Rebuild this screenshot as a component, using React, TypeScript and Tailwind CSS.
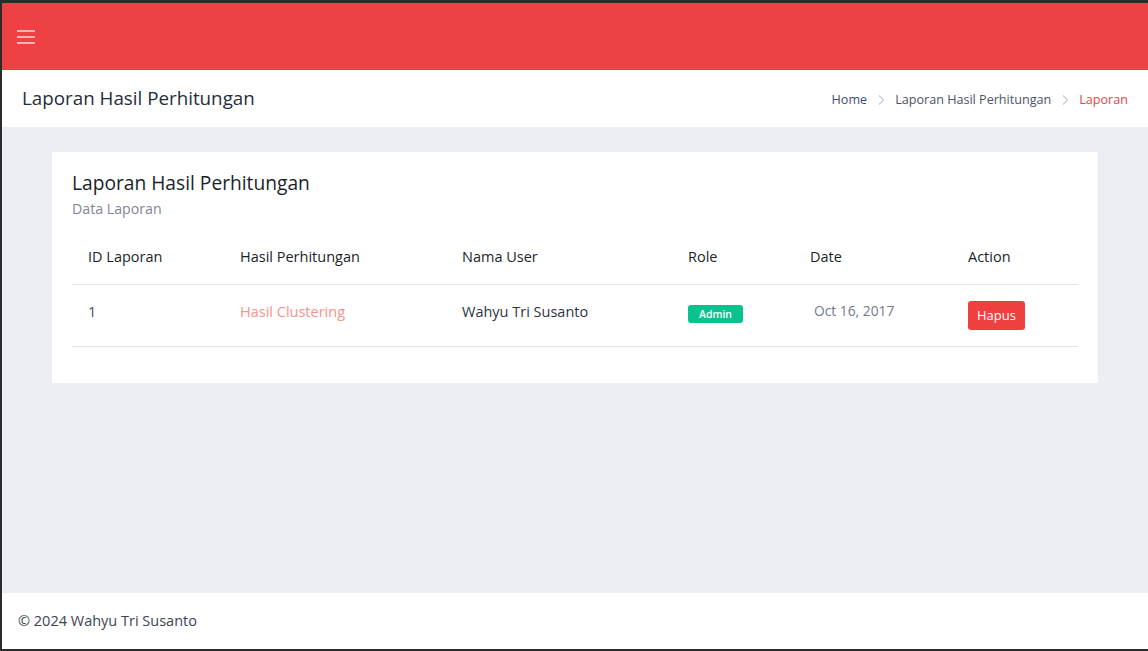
import React from "react";

const columns = ["ID Laporan", "Hasil Perhitungan", "Nama User", "Role", "Date", "Action"];
const widths = ["pl-[16px] w-[168px]", "w-[222px]", "w-[226px]", "w-[122px]", "w-[158px]", ""];

const Chevron: React.FC = () => (
  <span className="mx-[10px] text-[#c8ccd4]">
    <svg width="8" height="12" viewBox="0 0 8 12" fill="none" stroke="currentColor" strokeWidth="1.2">
      <path d="M2 1.5 6.5 6 2 10.5" />
    </svg>
  </span>
);

const App: React.FC = () => {
  return (
    <div
      className="h-[651px] w-[1148px] bg-[#2b2b2b] pt-[3px] pb-[2px] pl-[2px] flex flex-col overflow-hidden"
      style={{ fontFamily: '"Open Sans", "Liberation Sans", sans-serif' }}
    >
      <div className="flex-1 flex flex-col bg-[#ebeef3]">
        {/* top bar */}
        <header className="h-[67px] bg-[#ee4144] flex items-center pl-[15px]">
          <button aria-label="Toggle sidebar" className="flex flex-col gap-[4px] p-0">
            <span className="block w-[18px] h-[2px] bg-white/60" />
            <span className="block w-[18px] h-[2px] bg-white/60" />
            <span className="block w-[18px] h-[2px] bg-white/60" />
          </button>
        </header>

        {/* page title + breadcrumb */}
        <div className="h-[57px] bg-white flex items-center justify-between pl-[20px] pr-[20px]">
          <h1 className="text-[18.8px] text-[#1f2d3d]">Laporan Hasil Perhitungan</h1>
          <nav className="flex items-center text-[12.6px] text-[#4a5567] pt-[3px]">
            <span className="text-[#3d4f6f]">Home</span>
            <Chevron />
            <span>Laporan Hasil Perhitungan</span>
            <Chevron />
            <span className="text-[#ee4144]">Laporan</span>
          </nav>
        </div>

        {/* content */}
        <main className="flex-1 pt-[25px] pl-[50px] pr-[50px]">
          <div className="bg-white px-[20px] pt-[20px] pb-[36px]">
            <h2 className="text-[19.2px] font-medium text-[#1a1f29] leading-[22px]">Laporan Hasil Perhitungan</h2>
            <p className="text-[14.2px] text-[#7d8796] mt-[4px]">Data Laporan</p>

            <table className="w-full mt-[11px] text-[14.5px] text-left">
              <thead>
                <tr className="border-b border-[#e2e4ea] h-[54px]">
                  {columns.map((c, i) => (
                    <th key={c} className={"font-medium text-[#1a1f29] " + widths[i]}>
                      {c}
                    </th>
                  ))}
                </tr>
              </thead>
              <tbody>
                <tr className="border-b border-[#e2e4ea] h-[62px]">
                  <td className="pl-[16px] pb-[7px] text-[#3d4f6f]">1</td>
                  <td className="pb-[7px] text-[#f7918a]">Hasil Clustering</td>
                  <td className="pb-[7px] text-[#2c3442]">Wahyu Tri Susanto</td>
                  <td className="pb-[4px]">
                    <span className="inline-block bg-[#0bc28f] text-white text-[10.5px] font-semibold rounded-[3px] w-[55px] h-[18px] leading-[18px] text-center">
                      Admin
                    </span>
                  </td>
                  <td className="text-[#6f7a8a] text-[13.8px] pl-[4px] pb-[8px]">Oct 16, 2017</td>
                  <td>
                    <button className="bg-[#ef4040] text-white text-[13px] font-medium rounded-[3px] w-[57px] h-[29px]">
                      Hapus
                    </button>
                  </td>
                </tr>
              </tbody>
            </table>
          </div>
        </main>

        {/* footer */}
        <footer className="h-[56px] bg-white flex items-center pl-[16px] text-[14.5px] text-[#3d4452]">
          © 2024 Wahyu Tri Susanto
        </footer>
      </div>
    </div>
  );
};

export default App;
